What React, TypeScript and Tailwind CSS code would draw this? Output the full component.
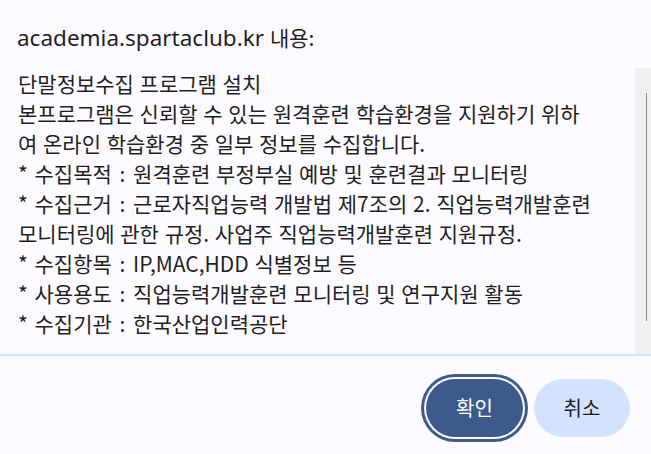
const lines = [
  '단말정보수집 프로그램 설치',
  '본프로그램은 신뢰할 수 있는 원격훈련 학습환경을 지원하기 위하',
  '여 온라인 학습환경 중 일부 정보를 수집합니다.',
  '* 수집목적 : 원격훈련 부정부실 예방 및 훈련결과 모니터링',
  '* 수집근거 : 근로자직업능력 개발법 제7조의 2. 직업능력개발훈련',
  '모니터링에 관한 규정. 사업주 직업능력개발훈련 지원규정.',
  '* 수집항목 : IP,MAC,HDD 식별정보 등',
  '* 사용용도 : 직업능력개발훈련 모니터링 및 연구지원 활동',
  '* 수집기관 : 한국산업인력공단',
];

// "* 항목 : 내용" lines get slightly wider bullet / colon like the original font
function Line({ text }: { text: string }) {
  const m = text.match(/^\* (.+?) : (.+)$/);
  if (!m) return <p className="whitespace-nowrap">{text}</p>;
  return (
    <p className="whitespace-nowrap">
      <span className="mr-[1px]">*</span> {m[1]} <span className="mx-[2px]">:</span> {m[2]}
    </p>
  );
}

export default function App() {
  return (
    <div className="flex h-[454px] w-[651px] flex-col overflow-hidden bg-[#fdfbff] font-['Noto_Sans','Noto_Sans_CJK_KR',sans-serif] text-[#1f1f1f]">
      {/* Title */}
      <h1 className="mb-[14px] pl-[17px] pt-[21px] text-[22.5px] leading-[32px] font-normal">
        academia.spartaclub.kr{' '}
        <span className="font-['Noto_Sans_CJK_KR',sans-serif] text-[21px]">내용:</span>
      </h1>

      <div className="flex h-[288px] border-b-2 border-[#d3e3fd]">
        <div className="flex-1 pl-[18px] font-['Noto_Sans_CJK_KR','Noto_Sans',sans-serif] text-[21px] leading-[30px] [word-spacing:1px]">
          {lines.map((line, i) => (
            <Line key={i} text={line} />
          ))}
        </div>
        <div className="w-[16px] bg-[#f0f0f0] pt-[25px]">
          <div className="ml-[11px] h-[228px] w-px bg-[#8a8a8a]" />
        </div>
      </div>

      {/* Buttons */}
      <div className="flex justify-end gap-[11px] pr-[21px] pt-[23px] font-['Noto_Sans_CJK_KR',sans-serif] text-[20px]">
        <button className="flex h-[58px] w-[97px] items-center justify-center rounded-full bg-[#3c5a8c] text-white shadow-[0_0_0_2px_#fdfbff,0_0_0_5px_#3c5a8c]">
          확인
        </button>
        <button className="flex h-[58px] w-[96px] items-center justify-center rounded-full bg-[#d3e3fd] text-[#1f1f1f]">
          취소
        </button>
      </div>
    </div>
  );
}
